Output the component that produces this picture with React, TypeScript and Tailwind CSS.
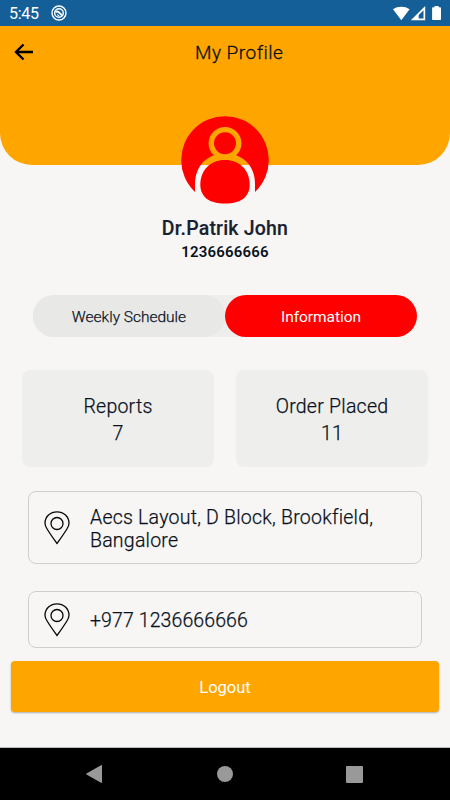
import React, { useState } from 'react';

const StatusBar = () => (
  <div className="flex h-[26px] shrink-0 items-center bg-[#155f99] pl-[9px] pr-2 text-white">
    <span className="w-[42px] pt-[2px] text-[16px] leading-[24px] tracking-[-0.3px]">5:45</span>
    <svg className="h-4 w-4" viewBox="0 0 16 16" fill="none" stroke="currentColor">
      <circle cx="8" cy="8" r="7" strokeWidth="1.4" />
      <circle cx="8" cy="8" r="4.3" strokeWidth="1.4" />
      <path d="M4.5 7c1.5-1 3-.4 4 .8l3 3" strokeWidth="1.9" />
      <path d="M6 9.5l2.5 1.6" strokeWidth="1" />
    </svg>
    <svg className="ml-auto h-[15px] w-[50px]" viewBox="0 0 50 15" fill="currentColor">
      <path d="M1 3.2C5.5-.1 13-.1 17.6 3.2L9.3 14.2z" />
      <path fillRule="evenodd" d="M33.2 0v14.3H18.8zM31.5 4.2L26.7 9v3.6h4.8z" />
      <path d="M42.6 0h4v1.3h1.2c.8 0 1.2.4 1.2 1.2v10.4c0 .8-.4 1.2-1.2 1.2h-6.5c-.8 0-1.2-.4-1.2-1.2V2.5c0-.8.4-1.2 1.2-1.2h1.3z" />
    </svg>
  </div>
);

const Avatar = () => (
  <svg className="absolute -bottom-[39px] left-[181px] h-[88px] w-[88px]" viewBox="0 0 88 88">
    <mask id="person">
      <circle cx="44" cy="44" r="43.8" fill="#fff" />
      <circle cx="44" cy="27.3" r="16.4" fill="#000" />
      <path d="M14 90V68C14 50 26 37.5 44 37.5S74 50 74 68v22z" fill="#000" />
      <path d="M19.3 69C19.3 54 29.5 44 44 44s24.7 10 24.7 25c0 5-1.5 8.5-4.5 12C60 85.8 52 87.6 44 87.6S28 85.8 23.8 81c-3-3.5-4.5-7-4.5-12z" fill="#fff" />
      <circle cx="44" cy="27.3" r="11" fill="#fff" />
    </mask>
    <rect width="88" height="88" fill="#f00" mask="url(#person)" />
  </svg>
);

const PinIcon = () => (
  <svg className="h-[34px] w-[26px] shrink-0" viewBox="0 0 26 34" fill="none" stroke="#080808" strokeWidth="1.3">
    <path d="M13 32.6C10.7 29.3 5.6 22.2 3.1 18 1.7 15.8 1 14.2 1 12.3 1 5.7 6.3.8 13 .8s12 4.9 12 11.5c0 1.9-.7 3.5-2.1 5.7-2.5 4.2-7.6 11.3-9.9 14.6z" strokeLinejoin="round" />
    <circle cx="13" cy="12.5" r="6" />
  </svg>
);

const StatCard = ({ label, value }: {label: string;value: number;}) => (
  <div className="flex h-[97px] w-48 flex-col items-center justify-center rounded-lg bg-[#eeeeec] pt-[2px] text-[19.5px] font-light leading-[27px] tracking-[0.25px] [-webkit-text-stroke:0.25px]">
    <span>{label}</span>
    <span>{value}</span>
  </div>
);

const App = () => {
  const [tab, setTab] = useState('info');
  const tabClass = (active: boolean) =>
  active ? 'bg-[#ff0000] text-white' : 'bg-[#e8e8e6]';

  return (
    <div className="flex h-[800px] w-[450px] flex-col overflow-hidden bg-[#f7f6f4] font-[Roboto,sans-serif] text-[#08111c]">
      <StatusBar />

      <header className="relative h-[139px] shrink-0 rounded-b-[32px] bg-[#ffa500]">
        <div className="flex h-[52px] items-center pl-[14px]">
          <button aria-label="Back">
            <svg className="h-[18px] w-[19px]" viewBox="0 0 19 18" fill="none" stroke="#000" strokeWidth="2.4">
              <path d="M9.5 1.5L2 9l7.5 7.5M2 9h17" />
            </svg>
          </button>
          <h1 className="ml-[162px] pt-[2px] text-[19px] font-light tracking-[0.5px] [-webkit-text-stroke:0.3px]">My Profile</h1>
        </div>
        <Avatar />
      </header>

      <div className="mt-[51px] flex flex-col items-center">
        <h2 className="text-[19.5px] font-medium leading-[26px] tracking-[0.2px] text-[#172130] [-webkit-text-stroke:0.15px]">Dr.Patrik John</h2>
        <p className="text-[15px] font-semibold leading-[21px] tracking-[0.2px]">1236666666</p>
      </div>

      {/* Tabs */}
      <div className="mx-auto mt-8 flex h-[42px] w-96 shrink-0 rounded-full bg-[#eeeeec] text-[15.5px]">
        <button className={`w-48 rounded-full pt-[3px] font-light [-webkit-text-stroke:0.25px] ${tabClass(tab === 'schedule')}`} onClick={() => setTab('schedule')}>
          Weekly Schedule
        </button>
        <button className={`w-48 rounded-full pt-[3px] tracking-[-0.05px] ${tabClass(tab === 'info')}`} onClick={() => setTab('info')}>
          Information
        </button>
      </div>

      <div className="mt-[33px] flex justify-between px-[22px]">
        <StatCard label="Reports" value={7} />
        <StatCard label="Order Placed" value={11} />
      </div>

      {/* Contact details */}
      <div className="mx-7 mt-6 flex h-[73px] shrink-0 items-center rounded-lg border border-[#cfcfcf] pl-[15px]">
        <PinIcon />
        <p className="ml-5 pt-[2px] text-[19.5px] font-light leading-[23px] tracking-[0.23px] [-webkit-text-stroke:0.25px]">Aecs Layout, D Block, Brookfield,<br />Bangalore</p>
      </div>
      <div className="mx-7 mt-[27px] flex h-[57px] shrink-0 items-center rounded-lg border border-[#cfcfcf] pl-[15px]">
        <PinIcon />
        <p className="ml-5 mt-0.5 text-[19.5px] font-light leading-[23px] tracking-[0.1px] [-webkit-text-stroke:0.25px]">+977 1236666666</p>
      </div>

      <button className="mx-[11px] mt-[13px] h-[51px] shrink-0 rounded bg-[#ffa500] pt-1 text-[16.5px] text-white shadow-[0_1px_2px_rgba(0,0,0,0.3)]">
        Logout
      </button>

      <nav className="mt-auto flex h-[53px] shrink-0 items-center justify-between border-t border-[#bbb] bg-black pl-[86px] pr-[87px]">
        <svg className="h-[18px] w-4" viewBox="0 0 16 18" fill="#999">
          <path d="M15 .2c.6-.3 1 0 1 .6v16.4c0 .6-.4.9-1 .6L.5 9.5c-.6-.3-.6-.7 0-1z" />
        </svg>
        <span className="ml-px h-4 w-4 rounded-full bg-[#999]" />
        <span className="h-[17px] w-[17px] rounded-[1px] bg-[#999]" />
      </nav>
    </div>);

};

export default App;
